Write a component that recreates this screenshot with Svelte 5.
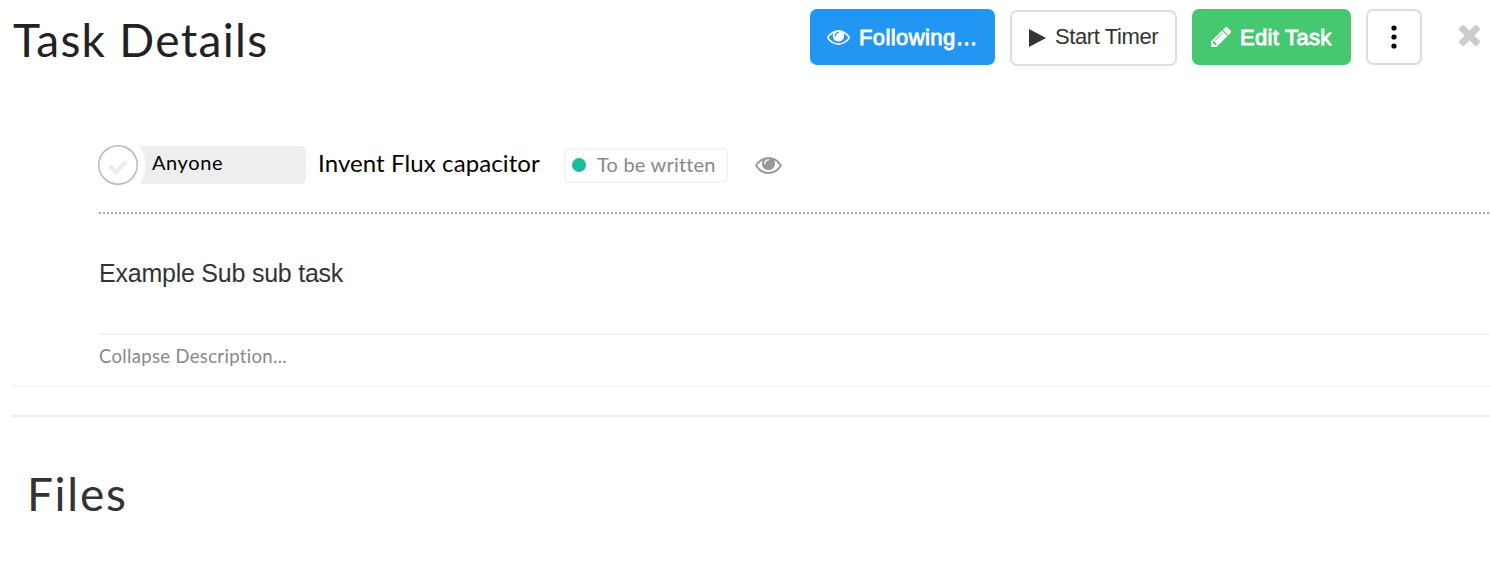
<script>
	const eyePath =
		'M1664 960q-152-236-381-353 61 104 61 225 0 185-131.5 316.5t-316.5 131.5-316.5-131.5-131.5-316.5q0-121 61-225-229 117-381 353 133 205 333.5 326.5t434.5 121.5 434.5-121.5 333.5-326.5zm-720-384q0-20-14-34t-34-14q-125 0-214.5 89.5t-89.5 214.5q0 20 14 34t34 14 34-14 14-34q0-86 61-147t147-61q20 0 34-14t14-34zm848 384q0 34-20 69-140 230-376.5 368.5t-499.5 138.5-499.5-139-376.5-368q-20-35-20-69t20-69q140-229 376.5-368t499.5-139 499.5 139 376.5 368q20 35 20 69z';

	let task = {
		assignee: 'Anyone',
		title: 'Invent Flux capacitor',
		status: 'To be written',
		description: 'Example Sub sub task'
	};
</script>

<div class="task-page">
	<header class="header">
		<h1>Task Details</h1>
		<div class="actions">
			<button class="btn following">
				<svg class="icon-eye" viewBox="0 384 1792 1152"><path d={eyePath} /></svg>
				<span>Following…</span>
			</button>
			<button class="btn timer">
				<svg class="icon-play" viewBox="0 0 17 18"><path d="M0 0L17 9L0 18Z" /></svg>
				<span>Start Timer</span>
			</button>
			<button class="btn edit">
				<svg class="icon-pencil" viewBox="128 149 1515 1515">
					<path
						d="M491 1536l91-91-235-235-91 91v107h128v128h107zm523-928q0-22-22-22-10 0-17 7l-542 542q-7 7-7 17 0 22 22 22 10 0 17-7l542-542q7-7 7-17zm-54-192l416 416-832 832h-416v-416zm683 96q0 53-37 90l-166 166-416-416 166-165q36-38 90-38 53 0 91 38l235 234q37 39 37 91z"
					/>
				</svg>
				<span>Edit Task</span>
			</button>
			<button class="btn more" aria-label="More">
				<svg class="icon-dots" viewBox="0 0 6 24">
					<circle cx="3" cy="3" r="2.6" />
					<circle cx="3" cy="12" r="2.6" />
					<circle cx="3" cy="21" r="2.6" />
				</svg>
			</button>
			<button class="close" aria-label="Close">
				<svg class="icon-times" viewBox="302 366 1188 1188">
					<path
						d="M1490 1322q0 40-28 68l-136 136q-28 28-68 28t-68-28l-294-294-294 294q-28 28-68 28t-68-28l-136-136q-28-28-28-68t28-68l294-294-294-294q-28-28-28-68t28-68l136-136q28-28 68-28t68 28l294 294 294-294q28-28 68-28t68 28l136 136q28 28 28 68t-28 68l-294 294 294 294q28 28 28 68z"
					/>
				</svg>
			</button>
		</div>
	</header>

	<section class="task">
		<div class="task-row">
			<button class="check" aria-label="Complete">
				<svg class="icon-check" viewBox="121 334 1550 1188">
					<path
						d="M1671 566q0 40-28 68l-724 724-136 136q-28 28-68 28t-68-28l-136-136-362-362q-28-28-28-68t28-68l136-136q28-28 68-28t68 28l294 295 656-657q28-28 68-28t68 28l136 136q28 28 28 68z"
					/>
				</svg>
			</button>
			<div class="assignee"><span>{task.assignee}</span></div>
			<span class="title">{task.title}</span>
			<div class="status">
				<i class="dot"></i>
				<span>{task.status}</span>
			</div>
			<svg class="icon-watch" viewBox="0 384 1792 1152"><path d={eyePath} /></svg>
		</div>
		<div class="dotted"></div>
		<p class="description">{task.description}</p>
		<div class="collapse"><span>Collapse Description...</span></div>
	</section>

	<section class="files">
		<h2>Files</h2>
	</section>
</div>

<style>
	:global(body) {
		margin: 0;
		background: #fff;
	}

	.task-page {
		box-sizing: border-box;
		width: 1490px;
		height: 578px;
		overflow: hidden;
		font-family: Lato, sans-serif;
		color: #222;
		white-space: nowrap;
	}

	button {
		box-sizing: border-box;
		padding: 0;
		border: none;
		background: none;
		font: inherit;
		color: inherit;
	}

	svg {
		display: block;
		flex: none;
		fill: currentColor;
	}

	h1,
	h2 {
		margin: 0;
		font-size: 46px;
		font-weight: 400;
		line-height: 56px;
	}

	.header {
		display: flex;
		justify-content: space-between;
		height: 145px;
		padding: 9px 10px 0 13px;
		box-sizing: border-box;
	}

	h1 {
		margin-top: 3px;
		letter-spacing: 1.3px;
	}

	.actions {
		display: flex;
		align-items: flex-start;
		gap: 15px;
		font-family: 'Liberation Sans', Arial, sans-serif;
		font-size: 22px;
	}

	.btn {
		display: flex;
		align-items: center;
		height: 56px;
		border-radius: 7px;
	}

	.following,
	.edit {
		gap: 9px;
		color: #fff;
	}

	.following span,
	.edit span {
		margin-top: 1px;
		-webkit-text-stroke: 0.9px #fff;
	}

	.following {
		width: 185px;
		padding-left: 17px;
		background: #2196f3;
		letter-spacing: 0.4px;
	}

	.icon-eye {
		width: 23px;
		height: 15px;
	}

	.timer {
		width: 167px;
		margin-top: 1px;
		padding-left: 17px;
		gap: 9px;
		border: 2px solid #dadfe4;
		color: #333;
		letter-spacing: -0.4px;
	}

	.timer span {
		margin-top: -3px;
	}

	.icon-play {
		width: 17px;
		height: 18px;
	}

	.edit {
		width: 159px;
		padding-left: 19px;
		background: #46c870;
		letter-spacing: 0.3px;
	}

	.icon-pencil {
		width: 20px;
		height: 20px;
	}

	.more {
		justify-content: center;
		width: 56px;
		border: 2px solid #dadfe4;
		color: #000;
	}

	.icon-dots {
		width: 6px;
		height: 24px;
		margin-top: -1px;
	}

	.close {
		margin: 16px 0 0 22px;
		color: #ccc;
	}

	.icon-times {
		width: 21px;
		height: 21px;
	}

	.task {
		padding: 0 1px 0 98px;
	}

	.task-row {
		display: flex;
		align-items: center;
		height: 40px;
		color: #000;
	}

	.check {
		display: flex;
		align-items: center;
		justify-content: center;
		width: 40px;
		height: 40px;
		padding-top: 4px;
		border-radius: 50%;
		box-shadow: inset 0 0 0 1.5px #bbb;
		color: #eee;
	}

	.icon-check {
		width: 20px;
		height: 15px;
	}

	.assignee {
		box-sizing: border-box;
		width: 168px;
		height: 38px;
		padding-left: 14px;
		border-radius: 0 5px 5px 0;
		background: radial-gradient(circle at -25.5px 19px, #fff 32.5px, #eee 33.5px);
		font-size: 20px;
		line-height: 33px;
		letter-spacing: 0.6px;
	}

	.title {
		width: 246px;
		margin: -4px 0 0 12px;
		font-size: 24px;
		line-height: 30px;
		letter-spacing: 0.1px;
	}

	.status {
		display: flex;
		align-items: center;
		box-sizing: border-box;
		width: 164px;
		height: 35px;
		padding-left: 6px;
		border: 2px solid #f3f3f3;
		border-radius: 5px;
		color: #888;
		font-size: 20px;
		letter-spacing: 0.2px;
	}

	.status span {
		margin-top: -2px;
	}

	.dot {
		width: 14px;
		height: 14px;
		margin-right: 11px;
		border-radius: 50%;
		background: #1abc9c;
	}

	.icon-watch {
		width: 27px;
		height: 17px;
		margin-left: 27px;
		color: #999;
	}

	.dotted {
		height: 2px;
		margin: 27px 0 0 1px;
		background: repeating-linear-gradient(90deg, #aaa 0 2px, transparent 2px 4px);
	}

	.description {
		height: 119px;
		margin: 0 0 0 1px;
		padding-top: 44px;
		box-sizing: border-box;
		font-family: 'Liberation Sans', Arial, sans-serif;
		font-size: 25px;
		line-height: 30px;
		letter-spacing: -0.23px;
		color: #333;
	}

	.collapse {
		height: 50px;
		margin-left: 1px;
		border-top: 2px solid #f3f3f3;
		color: #888;
		font-size: 18.5px;
		line-height: 43px;
		letter-spacing: 0.33px;
	}

	.files {
		margin-left: 12px;
		padding: 28px 0 0;
		border-top: 2px solid #f5f5f5;
	}

	.files h2 {
		padding: 49px 0 0 15px;
		border-top: 2px solid #eee;
		color: #333;
		letter-spacing: 1.7px;
	}
</style>
